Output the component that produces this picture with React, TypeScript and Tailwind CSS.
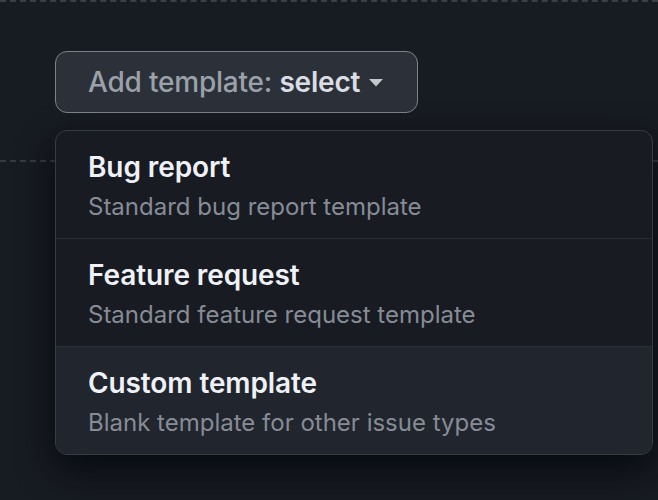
import React from "react";

const items = [
  { title: "Bug report", desc: "Standard bug report template" },
  { title: "Feature request", desc: "Standard feature request template" },
  { title: "Custom template", desc: "Blank template for other issue types", active: true },
];

export default function App() {
  return (
    <div
      className="w-[658px] h-[500px] bg-[#171b22] overflow-hidden"
      style={{ fontFamily: "Inter, 'Noto Sans', sans-serif" }}
    >
      <div className="border-t-2 border-dashed border-[#3a3f47]" />
      <div className="pl-[55px] pt-[49px] pb-[47px] border-b-2 border-dashed border-[#363b43]">
        <div className="relative inline-block">
          <button className="flex items-center gap-[9px] h-[62px] pl-[32px] pr-[34px] rounded-[12px] border border-[#7d838c] bg-[#2c3038] text-[28px] leading-[40px] tracking-[-0.2px]">
            <span className="text-[#9ba1aa] font-medium">
              Add template: <span className="text-[#dadde3] font-semibold">select</span>
            </span>
            <svg width="14" height="8" viewBox="0 0 14 8" className="mt-[1px]">
              <path d="M0 0h14L7 7.5z" fill="#c4c8ce" />
            </svg>
          </button>
          <div className="absolute left-0 top-[79px] w-[598px] rounded-[12px] border border-[#373c44] bg-[#181b22] overflow-hidden shadow-[0_14px_36px_rgba(2,4,8,0.75)] z-10">
            {items.map((it, i) => (
              <div
                key={it.title}
                className={
                  "px-[32px] pt-[16px] pb-[13px] " +
                  (i > 0 ? "border-t border-[#2a2e35] " : "") +
                  (it.active ? "bg-[#21252d]" : "")
                }
              >
                <div className="text-[28px] leading-[40px] font-semibold text-[#eef1f5] tracking-[-0.1px]">
                  {it.title}
                </div>
                <div className="mt-[2px] text-[24px] leading-[36px] text-[#868c96]">{it.desc}</div>
              </div>
            ))}
          </div>
        </div>
      </div>
    </div>
  );
}
